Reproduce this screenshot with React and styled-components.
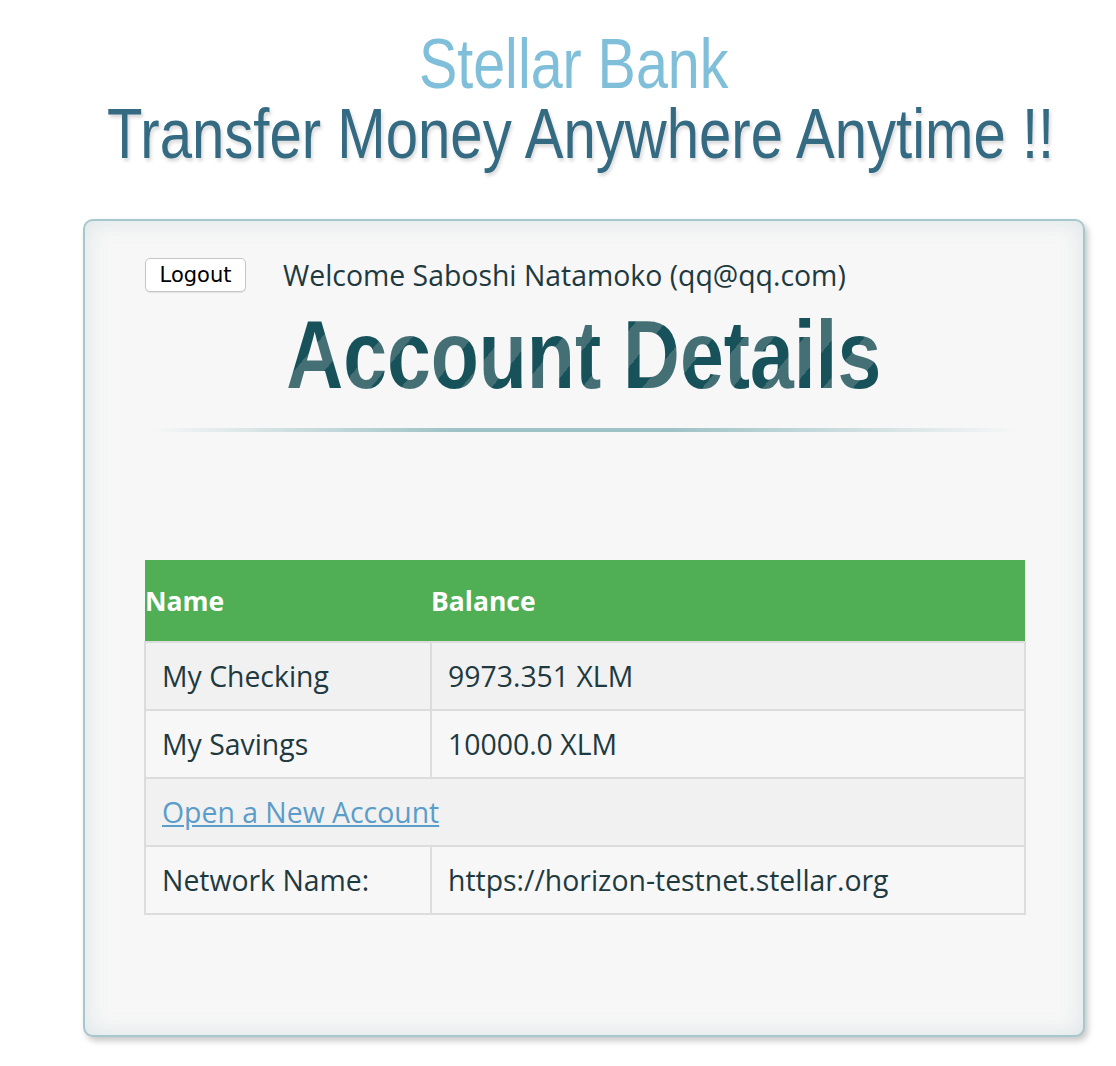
import React from "react";
import styled, { createGlobalStyle } from "styled-components";

const accounts = [
  { name: "My Checking", balance: "9973.351 XLM" },
  { name: "My Savings", balance: "10000.0 XLM" },
];

function App() {
  return (
    <>
      <GlobalStyle />
      <Page>
        <Heading>
          <Brand>Stellar Bank</Brand>
        </Heading>
        <Heading bottom="50px">
          <Tagline>Transfer Money Anywhere Anytime !!</Tagline>
        </Heading>
        <Card>
          <TopRow>
            <LogoutButton>Logout</LogoutButton>
            <Welcome>Welcome Saboshi Natamoko (qq@qq.com)</Welcome>
          </TopRow>
          <Heading top="15px">
            <Title>Account Details</Title>
          </Heading>
          <Rule />
          <Table>
            <thead>
              <tr>
                <Th width="286px">Name</Th>
                <Th>Balance</Th>
              </tr>
            </thead>
            <tbody>
              {accounts.map((a, i) => (
                <Row key={a.name} $shaded={i % 2 === 0}>
                  <Td>{a.name}</Td>
                  <Td>{a.balance}</Td>
                </Row>
              ))}
              <Row $shaded>
                <Td colSpan={2}>
                  <Link href="#">Open a New Account</Link>
                </Td>
              </Row>
              <Row>
                <Td>Network Name:</Td>
                <Td>https://horizon-testnet.stellar.org</Td>
              </Row>
            </tbody>
          </Table>
        </Card>
      </Page>
    </>
  );
}

export default App;

const GlobalStyle = createGlobalStyle`
  body {
    margin: 0;
    background: #ffffff;
  }
`;

const Page = styled.div`
  width: 1002px;
  margin-left: 83px;
  padding-top: 29px;
  padding-bottom: 28px;
`;

// Arial Narrow is not installed, so the headings squeeze Arial-width text
const Heading = styled.div`
  display: flex;
  justify-content: center;
  margin-top: ${(p) => p.top || "0"};
  margin-bottom: ${(p) => p.bottom || "0"};
`;

const Brand = styled.span`
  display: inline-block;
  flex: none;
  font-family: "Liberation Sans", Arial, sans-serif;
  font-size: 70px;
  line-height: 70px;
  color: #80bfd9;
  transform: translateX(-10px) scaleX(0.82);
`;

const Tagline = styled.span`
  display: inline-block;
  flex: none;
  font-family: "Liberation Sans", Arial, sans-serif;
  font-size: 70px;
  line-height: 70px;
  color: #346a82;
  white-space: nowrap;
  text-shadow: 2px 3px 4px rgba(0, 0, 0, 0.15);
  transform: translateX(-3px) scaleX(0.83);
`;

const Card = styled.div`
  box-sizing: border-box;
  height: 818px;
  border: 2px solid #a6c7cb;
  border-radius: 10px;
  background: #f7f7f7;
  box-shadow: inset 0 0 22px rgba(196, 212, 216, 0.55),
    3px 4px 6px rgba(0, 0, 0, 0.22);
  padding: 37px 59px 0 59px;
`;

const TopRow = styled.div`
  display: flex;
  align-items: center;
  gap: 37px;
  height: 34px;
  padding-left: 1px;
`;

const LogoutButton = styled.button`
  width: 101px;
  height: 34px;
  background: #ffffff;
  border: 1px solid #c6c6c6;
  border-radius: 5px;
  font-family: "DejaVu Sans", sans-serif;
  font-size: 21px;
  color: #000;
  padding: 0;
  box-shadow: 0 1px 1px rgba(0, 0, 0, 0.08);
`;

const Welcome = styled.span`
  font-family: "Open Sans", sans-serif;
  font-size: 28.4px;
  color: #1e3a40;
`;

const Title = styled.h2`
  display: inline-block;
  flex: none;
  margin: 0;
  font-family: "Liberation Sans", Arial, sans-serif;
  font-weight: bold;
  font-size: 96px;
  line-height: 96px;
  white-space: nowrap;
  background: repeating-linear-gradient(
    135deg,
    #436f75 0 26px,
    #17525b 26px 52px
  );
  -webkit-background-clip: text;
  background-clip: text;
  color: transparent;
  -webkit-text-fill-color: transparent;
  transform: scaleX(0.82);
`;

const Rule = styled.div`
  height: 4px;
  margin: 25px 6px 128px 6px;
  background: linear-gradient(
    to right,
    rgba(159, 194, 198, 0),
    #9fc2c6 35%,
    #9fc2c6 60%,
    rgba(159, 194, 198, 0)
  );
`;

const Table = styled.table`
  width: 882px;
  border-collapse: collapse;
  font-family: "Open Sans", sans-serif;
  font-size: 28.4px;
  color: #1e3a40;
`;

const Th = styled.th`
  width: ${(p) => p.width || "auto"};
  height: 81px;
  padding: 0;
  background: #50ae55;
  color: #ffffff;
  font-size: 26.5px;
  font-weight: bold;
  text-align: left;
`;

const Row = styled.tr`
  background: ${(p) => (p.$shaded ? "#f1f1f1" : "#f7f7f7")};
`;

const Td = styled.td`
  height: 66px;
  padding: 0 16px;
  border: 2px solid #dcdcdc;
  text-align: left;
`;

const Link = styled.a`
  color: #5b9dc9;
  text-decoration: underline;
`;
